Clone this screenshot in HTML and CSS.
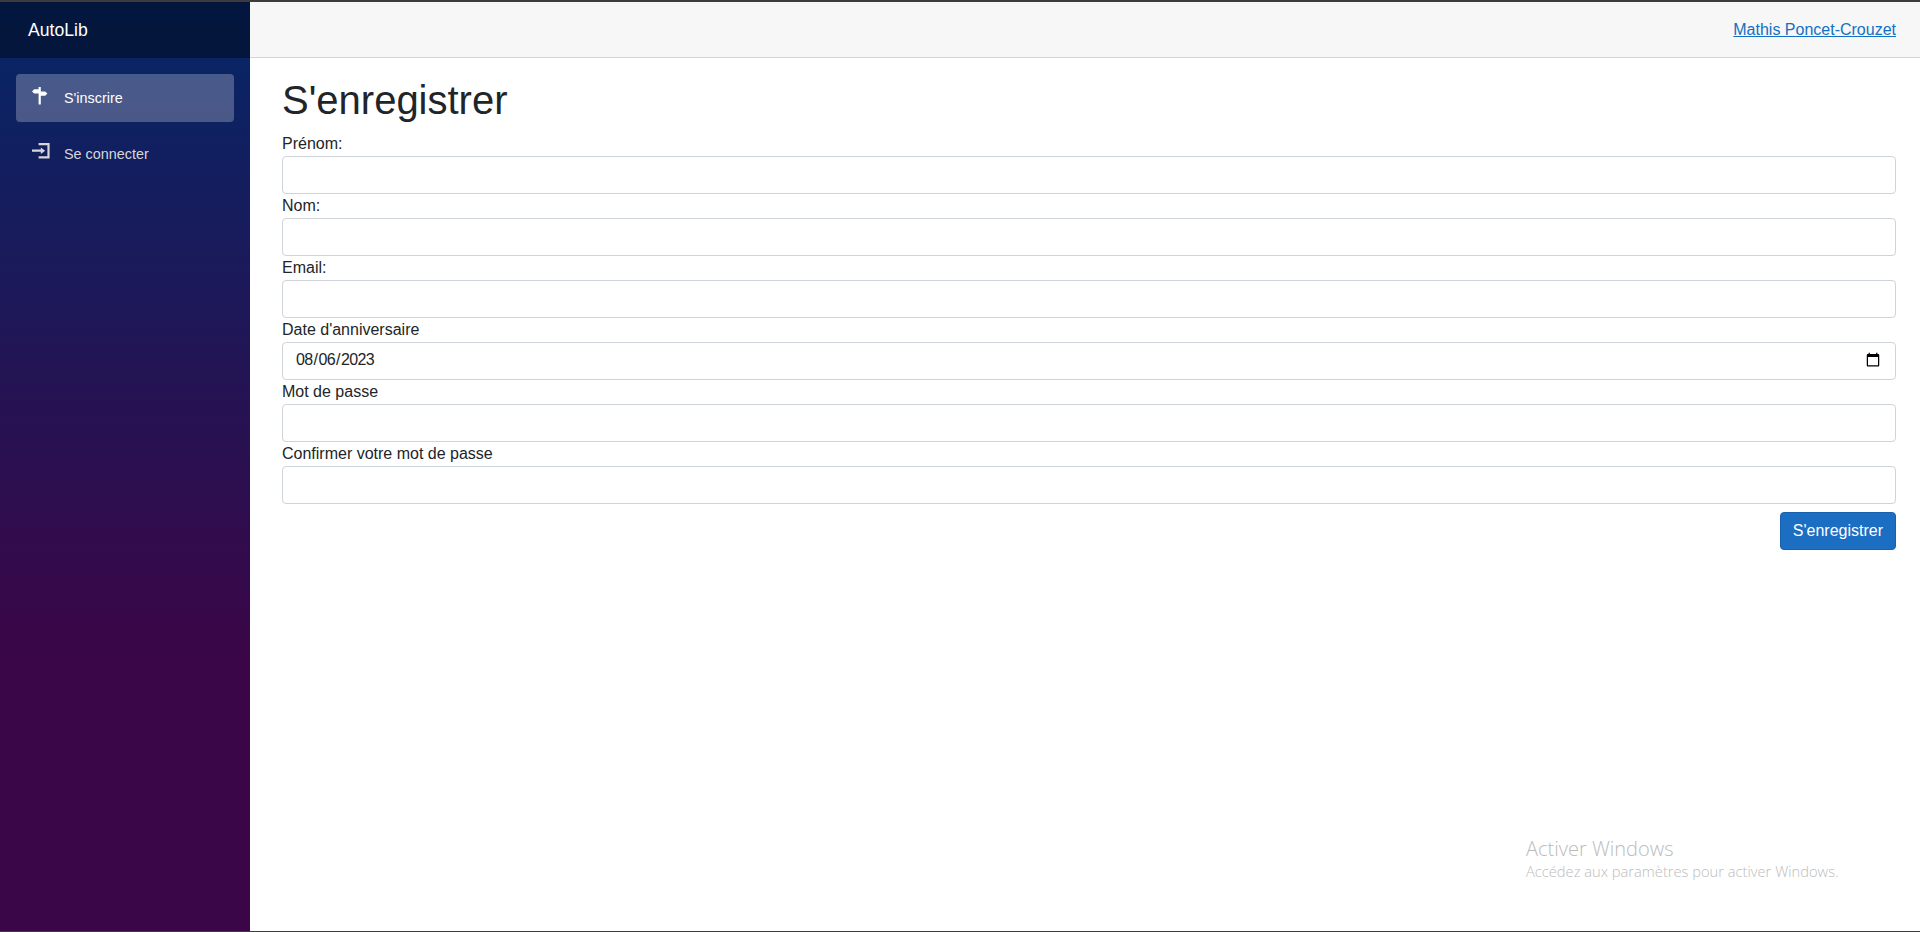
FILE: index.html
```html
<!DOCTYPE html>
<html lang="fr">
<head>
  <meta charset="UTF-8">
  <meta name="viewport" content="width=device-width, initial-scale=1.0">
  <title>AutoLib</title>
  <link rel="stylesheet" href="styles.css">
</head>
<body>
  <div class="page">
    <aside class="sidebar">
      <div class="brand-row">
        <a class="brand" href="#">AutoLib</a>
      </div>
      <nav class="side-nav">
        <div class="nav-item">
          <a class="nav-link active" href="#">
            <svg class="nav-icon" viewBox="0 0 8 8" fill="currentColor" aria-hidden="true">
              <path d="M3 0v1h-2l-1 1 1 1h2v5h1v-4h2l1-1-1-1h-2v-2h-1z"/>
            </svg>
            <span class="nav-text">S'inscrire</span>
          </a>
        </div>
        <div class="nav-item">
          <a class="nav-link" href="#">
            <svg class="nav-icon" viewBox="0 0 8 8" fill="currentColor" aria-hidden="true">
              <path d="M3 0v1h4v5h-4v1h5v-7h-5zm1 2v1h-4v1h4v1l2-1.500-2-1.500z"/>
            </svg>
            <span class="nav-text">Se connecter</span>
          </a>
        </div>
      </nav>
    </aside>

    <div class="main">
      <div class="top-row">
        <a href="#">Mathis Poncet-Crouzet</a>
      </div>
      <div class="content">
        <h1>S'enregistrer</h1>
        <form class="register-form">
          <label for="firstName">Prénom:</label>
          <input class="form-control" type="text" id="firstName">

          <label for="lastName">Nom:</label>
          <input class="form-control" type="text" id="lastName">

          <label for="email">Email:</label>
          <input class="form-control" type="text" id="email">

          <label for="birthDate">Date d'anniversaire</label>
          <input class="form-control date-control" type="date" id="birthDate" value="2023-08-06">

          <label for="password">Mot de passe</label>
          <input class="form-control" type="password" id="password">

          <label for="confirmPassword">Confirmer votre mot de passe</label>
          <input class="form-control" type="password" id="confirmPassword">

          <div class="form-actions">
            <button class="btn-primary" type="button">S'enregistrer</button>
          </div>
        </form>
      </div>
    </div>

    <div class="watermark">
      <div class="watermark-title">Activer Windows</div>
      <div class="watermark-text">Accédez aux paramètres pour activer Windows.</div>
    </div>
  </div>
</body>
</html>
```

FILE: styles.css
```css
* {
    box-sizing: border-box;
}

html, body {
    margin: 0;
    padding: 0;
    height: 100%;
    overflow: hidden;
}

body {
    font-family: "Liberation Sans", Arial, sans-serif;
    font-size: 16px;
    line-height: 1.5;
    color: #212529;
    background-color: #fff;
}

.page {
    position: relative;
    display: flex;
    height: 932px;
    border-top: 2px solid #3c3c3c;
    border-bottom: 1px solid #3c3c3c;
}

.sidebar {
    width: 250px;
    flex-shrink: 0;
    background-image: linear-gradient(180deg, rgb(5, 39, 103) 0%, #3a0647 70%);
}

.brand-row {
    display: flex;
    align-items: center;
    height: 56px;
    padding-left: 28px;
    background-color: rgba(0, 0, 0, 0.4);
}

.brand {
    font-size: 17.6px;
    color: #fff;
    text-decoration: none;
}

.side-nav {
    padding: 16px 16px 0;
}

.nav-item {
    padding-bottom: 8px;
}

.nav-link {
    display: flex;
    align-items: center;
    height: 48px;
    padding-left: 16px;
    border-radius: 4px;
    font-size: 14.4px;
    color: #d7d7d7;
    text-decoration: none;
}

.nav-link.active {
    background-color: rgba(255, 255, 255, 0.25);
    color: #fff;
}

.nav-icon {
    flex-shrink: 0;
    width: 17.6px;
    height: 17.6px;
    margin-top: -4.4px;
    margin-right: 14.4px;
}

.nav-text {
    margin-top: 2px;
}

.main {
    flex: 1;
    min-width: 0;
}

.top-row {
    display: flex;
    justify-content: flex-end;
    align-items: center;
    height: 56px;
    padding-right: 24px;
    background-color: #f7f7f7;
    border-bottom: 1px solid #d6d5d5;
}

.top-row a {
    color: #1270c4;
}

.content {
    padding: 18px 24px 0 32px;
}

h1 {
    margin: 0 0 8px;
    font-size: 40px;
    font-weight: 500;
    line-height: 1.2;
}

.register-form label {
    display: block;
}

.form-control {
    display: block;
    width: 100%;
    height: 38px;
    padding: 6px 12px;
    font-family: inherit;
    font-size: 16px;
    line-height: 1.5;
    color: #212529;
    background-color: #fff;
    border: 1px solid #ced4da;
    border-radius: 4px;
}

.date-control {
    padding-top: 5px;
    padding-bottom: 7px;
}

.date-control::-webkit-datetime-edit {
    letter-spacing: -0.6px;
}

.form-actions {
    display: flex;
    justify-content: flex-end;
    margin-top: 8px;
}

.btn-primary {
    height: 38px;
    padding: 6px 12px;
    font-family: inherit;
    font-size: 16px;
    line-height: 1.5;
    color: #fff;
    background-color: #1b6ec2;
    border: 1px solid #1861ac;
    border-radius: 4px;
}

.watermark {
    position: absolute;
    left: 1526px;
    top: 833px;
    font-family: "Open Sans", sans-serif;
    font-weight: 300;
    color: #bcbcbc;
}

.watermark-title {
    font-size: 20px;
    line-height: 27px;
}

.watermark-text {
    font-size: 14.700px;
    line-height: 18px;
}
```
